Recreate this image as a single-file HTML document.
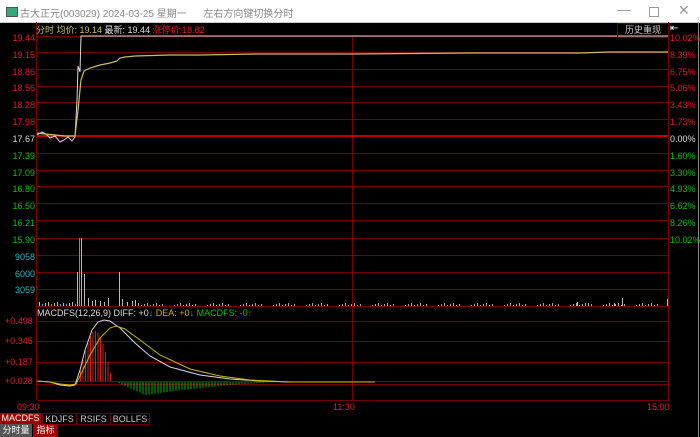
<!DOCTYPE html>
<html><head><meta charset="utf-8"><style>
body{margin:0;width:700px;height:437px;overflow:hidden;background:#000;font-family:"Liberation Sans","Noto Sans CJK SC",sans-serif;position:relative}
.t{position:absolute;white-space:nowrap;font-size:10px}
</style></head><body>
<div style="position:absolute;left:0;top:0;width:700px;height:22px;background:#fff;border-bottom:1px solid #ccc"></div>
<div style="position:absolute;left:6px;top:7px;width:10px;height:8px;border:1px solid #555;background:#3a7"></div>
<div class="t" style="left:20px;top:5px;color:#888;font-size:10px">古大正元(003029) 2024-03-25 星期一 &nbsp;&nbsp;&nbsp;&nbsp;&nbsp;左右方向键切换分时</div>
<div class="t" style="left:617px;top:1px;color:#999;font-size:14px">—</div>
<div class="t" style="left:649px;top:7px;width:8px;height:8px;border:1px solid #999"></div>
<div class="t" style="left:678px;top:2px;color:#999;font-size:14px">✕</div>
<svg width="700" height="437" style="position:absolute;left:0;top:0" xmlns="http://www.w3.org/2000/svg">
<g stroke="#7a0000" stroke-width="1">
<line x1="37" y1="36.5" x2="668" y2="36.5"/><line x1="37" y1="52.5" x2="668" y2="52.5"/><line x1="37" y1="69.5" x2="668" y2="69.5"/><line x1="37" y1="86.5" x2="668" y2="86.5"/><line x1="37" y1="102.5" x2="668" y2="102.5"/><line x1="37" y1="119.5" x2="668" y2="119.5"/>
<line x1="37" y1="153.5" x2="668" y2="153.5"/><line x1="37" y1="170.5" x2="668" y2="170.5"/><line x1="37" y1="186.5" x2="668" y2="186.5"/><line x1="37" y1="203.5" x2="668" y2="203.5"/><line x1="37" y1="220.5" x2="668" y2="220.5"/><line x1="37" y1="238.5" x2="668" y2="238.5"/>
<line x1="37" y1="255.5" x2="668" y2="255.5"/><line x1="37" y1="272.5" x2="668" y2="272.5"/><line x1="37" y1="289.5" x2="668" y2="289.5"/><line x1="37" y1="306.5" x2="668" y2="306.5"/>
<line x1="37" y1="321.5" x2="668" y2="321.5"/><line x1="37" y1="341.5" x2="668" y2="341.5"/><line x1="37" y1="362.5" x2="668" y2="362.5"/><line x1="37" y1="381.5" x2="668" y2="381.5"/><line x1="37" y1="384.5" x2="668" y2="384.5"/><line x1="37" y1="400.5" x2="668" y2="400.5"/>
<line x1="36.5" y1="22" x2="36.5" y2="400"/><line x1="668.5" y1="22" x2="668.5" y2="401"/><line x1="352.5" y1="36" x2="352.5" y2="400"/>
</g>
<line x1="37" y1="136" x2="668" y2="136" stroke="#c00000" stroke-width="2"/>
<line x1="698.5" y1="22" x2="698.5" y2="437" stroke="#888"/>
<polyline fill="none" stroke="#d8d8d8" stroke-width="1" points="37,135 42,132 46,134 50,138 55,136 60,142 64,140 68,137 72,141 75,137 77,100 78,66 80,72 81,36 668,36"/>
<polyline fill="none" stroke="#c8c060" stroke-width="1.2" points="37,133 45,134 55,135 65,136 75,136 78,110 81,80 84,71 90,68 100,65 110,63 117,61 120,58 125,57 135,56 170,55 200,55 256,54 350,54 470,53 580,53 610,52 668,52"/>
<g id="vb" stroke-width="1"></g>
<g id="mb" stroke-width="1"></g>
<polyline fill="none" stroke="#d8d8d8" stroke-width="1" points="37,381 50,382 60,385 70,386 75,385 80,370 85,350 92,330 98,322 104,320 110,321 120,328 135,343 150,356 170,367 200,375 230,379 260,381 290,382"/>
<polyline fill="none" stroke="#c8b800" stroke-width="1" points="37,381 50,382 60,384 70,385 76,384 82,372 90,355 100,338 110,328 116,326 125,329 140,340 160,355 190,369 220,376 250,380 290,382 375,382"/>
</svg>
<script>
var g=document.getElementById('vb'),s='';
function b(x,h,c){s+='<line x1="'+(x+0.5)+'" y1="306" x2="'+(x+0.5)+'" y2="'+(306-h)+'" stroke="'+c+'"/>';}
var big={79:68,81:68,77:34,84:32,88:8,92:5,95:6,100:5,104:4,108:8,119:34,122:7,127:4,132:5,135:6};
for(var x=39;x<667;x+=3){var xi=Math.round(x);var r=(xi*37)%11;
 if(xi>=76&&xi<=136)continue;
 if(xi>140&&r<3)continue;
 var h=xi<76?(2+r%3):(1+r%3);
 var c=xi<76?(r%3==0?'#3ac':'#c8c060'):'#aaa';b(xi,h,c);}
for(var k in big){var xi=+k;b(xi,big[k],xi==79?'#3ac':(xi==81||xi==77?'#c8c060':'#bbb'));}
b(622,8,'#bbb');b(667,7,'#bbb');b(577,4,'#bbb');b(588,3,'#bbb');b(614,3,'#bbb');
g.innerHTML=s;
var m=document.getElementById('mb'),t='';
for(var x=78;x<=112;x+=2.5){var p=(x-78)/34;var h=Math.sin(Math.min(1,p*1.5)*Math.PI*0.5)*(1-Math.pow(p,3))*62;t+='<line x1="'+x+'" y1="381" x2="'+x+'" y2="'+(381-h)+'" stroke="#d02020"/>';}
for(var x=116;x<=290;x+=3){var p=(x-116)/174;var h=(p<0.17?p/0.17:Math.pow(1-(p-0.17)/0.83,1.6))*13;t+='<line x1="'+x+'" y1="382" x2="'+x+'" y2="'+(382+h)+'" stroke="#10b010"/>';}
m.innerHTML=t;
</script>
<div class="t" style="left:36px;top:23px;font-size:9px"><span style="color:#c8c060">分时 均价: 19.14</span> <span style="color:#ddd">最新: 19.44</span> <span style="color:#e02020">涨停价:18.82</span></div>
<div class="t" style="left:617px;top:23px;width:50px;height:13px;border:1px solid #6a0000;color:#ccc;font-size:9px;text-align:center;line-height:13px">历史重现</div>
<div class="t" style="left:670px;top:23px;color:#fff;font-size:10px">⇤</div>
<div style="position:absolute;left:0;top:30px;width:35px;font-size:9px;text-align:right;line-height:16.83px">
<div style="color:#e02020">19.44</div><div style="color:#e02020">19.15</div><div style="color:#e02020">18.86</div><div style="color:#e02020">18.56</div><div style="color:#e02020">18.28</div><div style="color:#e02020">17.98</div><div style="color:#ddd">17.67</div><div style="color:#10c010">17.39</div><div style="color:#10c010">17.09</div><div style="color:#10c010">16.80</div><div style="color:#10c010">16.50</div><div style="color:#10c010">16.21</div><div style="color:#10c010">15.90</div><div style="color:#2ab8c8">9058</div><div style="color:#2ab8c8">6000</div><div style="color:#2ab8c8">3059</div></div>
<div style="position:absolute;left:670px;top:30px;font-size:9px;line-height:16.83px">
<div style="color:#e02020">10.02%</div><div style="color:#e02020">8.39%</div><div style="color:#e02020">6.75%</div><div style="color:#e02020">5.06%</div><div style="color:#e02020">3.43%</div><div style="color:#e02020">1.73%</div><div style="color:#ddd">0.00%</div><div style="color:#10c010">1.60%</div><div style="color:#10c010">3.30%</div><div style="color:#10c010">4.93%</div><div style="color:#10c010">6.62%</div><div style="color:#10c010">8.26%</div><div style="color:#10c010">10.02%</div></div>
<div class="t" style="left:37px;top:308px;font-size:9px"><span style="color:#ddd">MACDFS(12,26,9) DIFF: +0<span style="color:#3ac">↓</span></span> <span style="color:#c8b800">DEA: +0<span style="color:#3ac">↓</span></span> <span style="color:#10c010">MACDFS: -0<span style="color:#e02020">↑</span></span></div>
<div class="t" style="left:5px;top:316px;color:#e02020;font-size:9px">+0.498</div>
<div class="t" style="left:5px;top:336px;color:#e02020;font-size:9px">+0.345</div>
<div class="t" style="left:5px;top:357px;color:#e02020;font-size:9px">+0.187</div>
<div class="t" style="left:5px;top:376px;color:#e02020;font-size:9px">+0.028</div>
<div class="t" style="left:17px;top:402px;color:#e02020;font-size:9px">09:30</div>
<div class="t" style="left:333px;top:402px;color:#e02020;font-size:9px">11:30</div>
<div class="t" style="left:647px;top:402px;color:#e02020;font-size:9px">15:00</div>
<div class="t" style="left:0;top:413px;width:41px;height:11px;background:#a00000;color:#fff;font-size:9px;text-align:center;line-height:11px">MACDFS</div>
<div class="t" style="left:42px;top:413px;width:33px;height:10px;border:1px solid #6a0000;color:#ccc;font-size:9px;text-align:center;line-height:10px">KDJFS</div>
<div class="t" style="left:76px;top:413px;width:33px;height:10px;border:1px solid #6a0000;color:#ccc;font-size:9px;text-align:center;line-height:10px">RSIFS</div>
<div class="t" style="left:110px;top:413px;width:38px;height:10px;border:1px solid #6a0000;color:#ccc;font-size:9px;text-align:center;line-height:10px">BOLLFS</div>
<div class="t" style="left:0;top:424px;width:32px;height:13px;background:#555;color:#fff;font-size:9px;text-align:center;line-height:13px">分时量</div>
<div class="t" style="left:33px;top:424px;width:25px;height:13px;background:#a00000;color:#fff;font-size:9px;text-align:center;line-height:13px">指标</div>
</body></html>
